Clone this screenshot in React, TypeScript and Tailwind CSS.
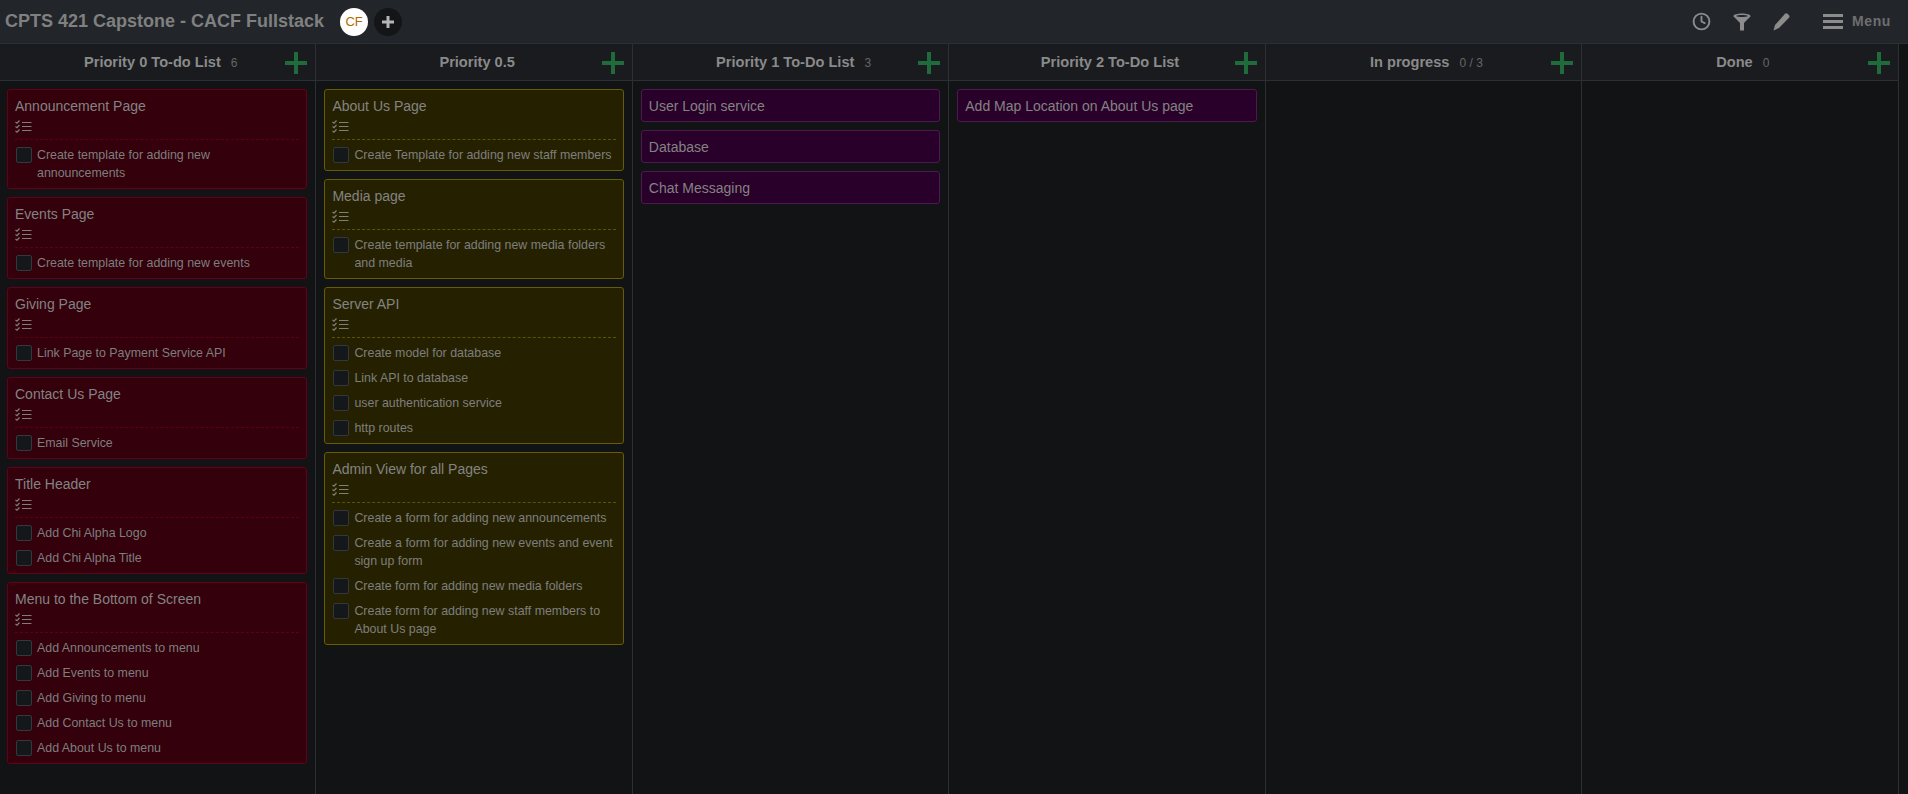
import { Clock } from 'lucide-react';

type Tone = 'red' | 'olive' | 'purple';

type Card = {
  title: string;
  tasks?: string[];
};

type Column = {
  title: string;
  count?: string;
  tone: Tone;
  cards: Card[];
};

const columns: Column[] = [
  {
    title: 'Priority 0 To-do List',
    count: '6',
    tone: 'red',
    cards: [
      { title: 'Announcement Page', tasks: ['Create template for adding new announcements'] },
      { title: 'Events Page', tasks: ['Create template for adding new events'] },
      { title: 'Giving Page', tasks: ['Link Page to Payment Service API'] },
      { title: 'Contact Us Page', tasks: ['Email Service'] },
      { title: 'Title Header', tasks: ['Add Chi Alpha Logo', 'Add Chi Alpha Title'] },
      {
        title: 'Menu to the Bottom of Screen',
        tasks: [
          'Add Announcements to menu',
          'Add Events to menu',
          'Add Giving to menu',
          'Add Contact Us to menu',
          'Add About Us to menu',
        ],
      },
    ],
  },
  {
    title: 'Priority 0.5',
    tone: 'olive',
    cards: [
      { title: 'About Us Page', tasks: ['Create Template for adding new staff members'] },
      { title: 'Media page', tasks: ['Create template for adding new media folders and media'] },
      {
        title: 'Server API',
        tasks: ['Create model for database', 'Link API to database', 'user authentication service', 'http routes'],
      },
      {
        title: 'Admin View for all Pages',
        tasks: [
          'Create a form for adding new announcements',
          'Create a form for adding new events and event sign up form',
          'Create form for adding new media folders',
          'Create form for adding new staff members to About Us page',
        ],
      },
    ],
  },
  {
    title: 'Priority 1 To-Do List',
    count: '3',
    tone: 'purple',
    cards: [{ title: 'User Login service' }, { title: 'Database' }, { title: 'Chat Messaging' }],
  },
  {
    title: 'Priority 2 To-Do List',
    tone: 'purple',
    cards: [{ title: 'Add Map Location on About Us page' }],
  },
  { title: 'In progress', count: '0 / 3', tone: 'purple', cards: [] },
  { title: 'Done', count: '0', tone: 'purple', cards: [] },
];

const toneClasses: Record<Tone, string> = {
  red: 'bg-[#33000b] border-[#66001a]',
  olive: 'bg-[#252100] border-[#665c00]',
  purple: 'bg-[#290029] border-[#4d1a4d]',
};

const dividerClasses: Record<Tone, string> = {
  red: 'border-[#5c0017]',
  olive: 'border-[#5c5300]',
  purple: 'border-[#4d1a4d]',
};

function ChecklistIcon() {
  return (
    <svg width="17" height="13" viewBox="0 0 17 13" fill="none" stroke="#7f7f76" aria-hidden="true">
      <path strokeWidth="1.2" d="M0.500 2l1.500 1.200L4.500 0.500M0.500 6.500l1.500 1.200L4.500 5M0.500 11l1.500 1.200L4.500 9.500" />
      <path d="M7 2.500h9.500M7 6.500h9.500M7 10.500h9.500" />
    </svg>
  );
}

function AddIcon() {
  return (
    <svg width="22" height="22" viewBox="0 0 22 22" fill="#1f6b3c" aria-hidden="true">
      <path d="M9 0h4v9h9v4h-9v9H9v-9H0V9h9z" />
    </svg>
  );
}

function TaskCard({ card, tone }: { card: Card; tone: Tone }) {
  return (
    <div className={`rounded-[3px] border px-[7px] pt-[7px] ${card.tasks ? 'pb-[5px]' : 'pb-[6px]'} ${toneClasses[tone]}`}>
      <div className="text-[14px] leading-[18px] text-[#838383]">{card.title}</div>
      {card.tasks && (
        <>
          <div className="h-[24px] flex items-center pb-[1px]">
            <ChecklistIcon />
          </div>
          <div className={`border-t border-dashed ${dividerClasses[tone]}`}>
            {card.tasks.map((task) => (
              <div key={task} className="flex items-start pl-[1px] pt-[6px] pb-[1px]">
                <span className="w-4 h-4 mt-[1px] shrink-0 rounded-[2px] border border-[#33383d] bg-[#15181b]" />
                <span className="ml-[5px] text-[12.4px] leading-[18px] text-[#7e7e7e]">{task}</span>
              </div>
            ))}
          </div>
        </>
      )}
    </div>
  );
}

function BoardColumn({ column, first }: { column: Column; first: boolean }) {
  return (
    <div className="flex-1 min-w-0 flex flex-col border-r border-[#2c2f33]">
      <div className="relative h-[37px] shrink-0 border-b border-[#2c2f33] bg-[#191b1e] flex items-center justify-center pl-[6px] pt-[2px]">
        <span className="text-[14.6px] font-bold text-[#8a8a8a]">{column.title}</span>
        {column.count && <span className="ml-[10px] text-[12px] text-[#666666]">{column.count}</span>}
        <div className="absolute right-[8px] top-[8px]">
          <AddIcon />
        </div>
      </div>
      <div className={`flex-1 flex flex-col gap-2 pr-[8px] py-2 ${first ? 'pl-[7px]' : 'pl-2'}`}>
        {column.cards.map((card) => (
          <TaskCard key={card.title} card={card} tone={column.tone} />
        ))}
      </div>
    </div>
  );
}

export default function App() {
  return (
    <div className="h-[794px] flex flex-col overflow-hidden bg-[#111315] font-['Liberation_Sans',Arial,sans-serif]">
      <header className="h-[44px] shrink-0 flex items-center border-b border-[#2c2f33] bg-[#22262b]">
        <h1 className="ml-[5px] text-[18px] font-bold text-[#808080]">CPTS 421 Capstone - CACF Fullstack</h1>
        <div className="ml-[16px] w-7 h-7 rounded-full bg-white flex items-center justify-center text-[13px] text-[#b36b00]">
          CF
        </div>
        <div className="ml-[6px] w-7 h-7 rounded-full bg-[#131517] flex items-center justify-center">
          <svg width="12" height="12" viewBox="0 0 12 12" fill="#b5b5b5" aria-hidden="true">
            <path d="M4.500 0h3v4.500H12v3H7.500V12h-3V7.500H0v-3h4.500z" />
          </svg>
        </div>
        <div className="ml-auto flex items-center text-[#8c8c8c]">
          <Clock className="w-[19px] h-[19px]" strokeWidth={2.4} />
          <svg className="ml-[22px]" width="18" height="18" viewBox="0 0 18 18" fill="currentColor" aria-hidden="true">
            <path d="M0.500 3C0.500 1.500 4.500 0.500 9 0.500s8.500 1 8.500 2.500c0 .7-.6 1.300-1.400 1.700L11 10v7.500H7V10L1.900 4.700C1.100 4.300.5 3.700.5 3zM3 3c1 .7 3.300 1 6 1s5-.3 6-1c-1-.7-3.300-1-6-1s-5 .3-6 1z" fillRule="evenodd" />
          </svg>
          <svg className="ml-[22px]" width="17" height="18" viewBox="0 0 17 18" fill="currentColor" aria-hidden="true">
            <path d="M12 .8c.8-.7 1.900-.7 2.700.1l1.200 1.200c.8.800.8 1.900.1 2.700L6 15l-5.500 2.500L2 12z" />
          </svg>
          <svg className="ml-[33px]" width="20" height="15" viewBox="0 0 20 15" fill="currentColor" aria-hidden="true">
            <path d="M0 0h20v3H0zM0 6h20v3H0zM0 12h20v3H0z" />
          </svg>
          <span className="ml-[9px] mr-[17px] text-[14px] font-bold tracking-[0.6px] text-[#6e6e6e]">Menu</span>
        </div>
      </header>
      <div className="flex-1 flex min-h-0 pr-[9.5px]">
        {columns.map((column, i) => (
          <BoardColumn key={column.title} column={column} first={i === 0} />
        ))}
      </div>
    </div>
  );
}
